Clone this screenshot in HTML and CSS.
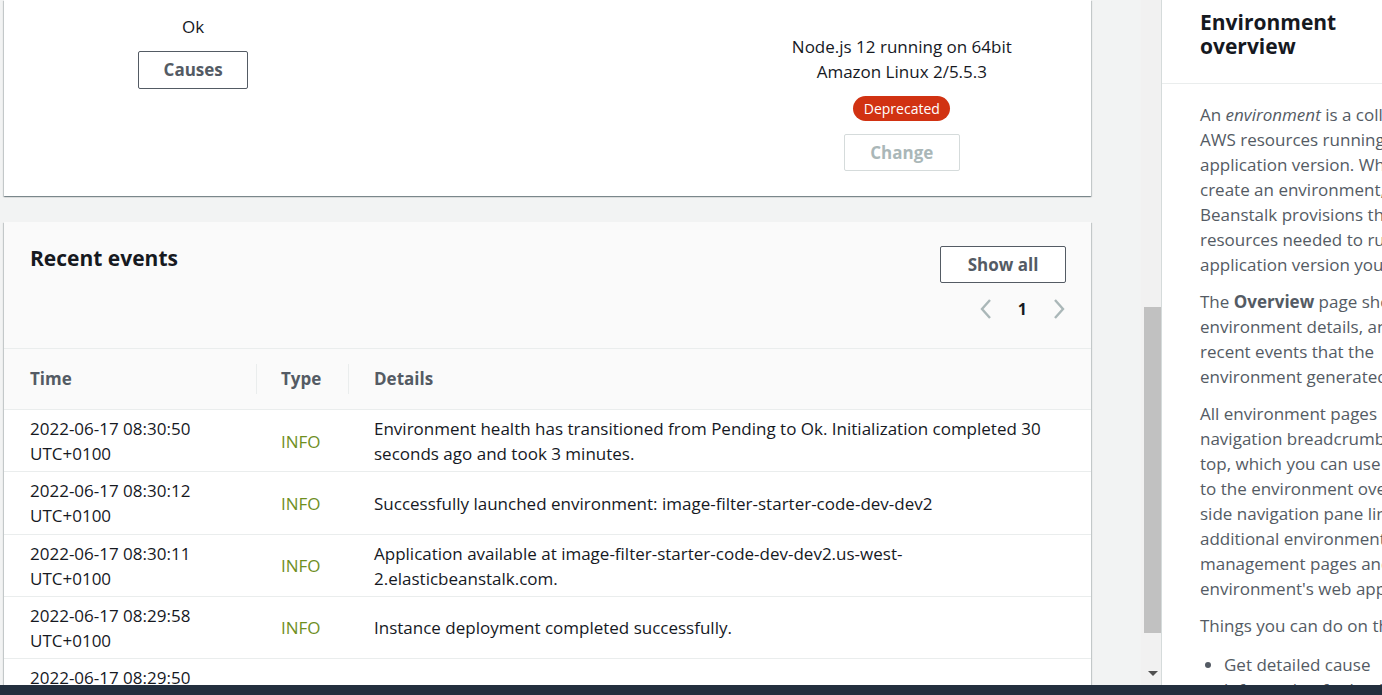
FILE: index.html
```html
<!DOCTYPE html>
<html lang="en">
<head>
<meta charset="utf-8">
<title>Environment overview</title>
<link rel="stylesheet" href="styles.css">
</head>
<body>
<div class="app">
  <div class="main">
    <div class="content">
      <section class="card summary">
        <div class="col col-health">
          <div class="value">Ok</div>
          <button class="btn btn-causes">Causes</button>
        </div>
        <div class="col"></div>
        <div class="col col-platform">
          <div class="value">Node.js 12 running on 64bit<br>Amazon Linux 2/5.5.3</div>
          <span class="badge">Deprecated</span>
          <button class="btn btn-change" disabled>Change</button>
        </div>
      </section>

      <section class="card events">
        <div class="events-head">
          <h2 class="events-title">Recent events</h2>
          <div class="events-actions">
            <button class="btn btn-show">Show all</button>
            <div class="pager">
              <svg class="chev" width="14" height="22" viewBox="0 0 14 22"><path d="M11 2 L3 11 L11 20" fill="none" stroke="#aab7b8" stroke-width="2.4"/></svg>
              <span class="page">1</span>
              <svg class="chev" width="14" height="22" viewBox="0 0 14 22"><path d="M3 2 L11 11 L3 20" fill="none" stroke="#aab7b8" stroke-width="2.4"/></svg>
            </div>
          </div>
        </div>
        <table class="events-table">
          <thead>
            <tr>
              <th class="c-time">Time</th>
              <th class="c-type sep">Type</th>
              <th class="c-details sep">Details</th>
            </tr>
          </thead>
          <tbody>
            <tr>
              <td class="c-time">2022-06-17 08:30:50<br>UTC+0100</td>
              <td class="c-type info">INFO</td>
              <td class="c-details">Environment health has transitioned from Pending to Ok. Initialization completed 30 seconds ago and took 3 minutes.</td>
            </tr>
            <tr>
              <td class="c-time">2022-06-17 08:30:12<br>UTC+0100</td>
              <td class="c-type info">INFO</td>
              <td class="c-details">Successfully launched environment: image-filter-starter-code-dev-dev2</td>
            </tr>
            <tr>
              <td class="c-time">2022-06-17 08:30:11<br>UTC+0100</td>
              <td class="c-type info">INFO</td>
              <td class="c-details">Application available at image-filter-starter-code-dev-dev2.us-west-2.elasticbeanstalk.com.</td>
            </tr>
            <tr>
              <td class="c-time">2022-06-17 08:29:58<br>UTC+0100</td>
              <td class="c-type info">INFO</td>
              <td class="c-details">Instance deployment completed successfully.</td>
            </tr>
            <tr>
              <td class="c-time">2022-06-17 08:29:50<br>UTC+0100</td>
              <td class="c-type info">INFO</td>
              <td class="c-details">Added instance [i-0987654321abcdef0] to your environment.</td>
            </tr>
          </tbody>
        </table>
      </section>
    </div>
    <div class="scrollbar">
      <div class="sb-space"></div>
      <div class="sb-thumb"></div>
      <div class="sb-rest"><span class="sb-arrow"></span></div>
    </div>
  </div>

  <aside class="help">
    <div class="help-head">
      <h2 class="help-title">Environment overview</h2>
    </div>
    <div class="help-body">
      <p>An <em>environment</em> is a collection of<br>AWS resources running an<br>application version. When you<br>create an environment, Elastic<br>Beanstalk provisions the<br>resources needed to run the<br>application version you specified.</p>
      <p>The <strong>Overview</strong> page shows the<br>environment details, and the<br>recent events that the<br>environment generated.</p>
      <p>All environment pages have a<br>navigation breadcrumb at the<br>top, which you can use to return<br>to the environment overview. The<br>side navigation pane links to<br>additional environment<br>management pages and to your<br>environment's web application.</p>
      <p>Things you can do on this page:</p>
      <ul>
        <li>Get detailed cause<br>information for health issues.</li>
      </ul>
    </div>
  </aside>
</div>
<footer class="footer"></footer>
</body>
</html>
```

FILE: styles.css
```css
html, body {
  margin: 0;
  padding: 0;
}

body {
  width: 1382px;
  height: 695px;
  overflow: hidden;
  display: flex;
  flex-direction: column;
  background: #f2f3f3;
  color: #16191f;
  font-family: "Open Sans", "Noto Sans", sans-serif;
  font-size: 17px;
  line-height: 25px;
}

.app {
  display: flex;
  height: 685px;
  flex: none;
  overflow: hidden;
}

.main {
  display: flex;
  width: 1161px;
  flex: none;
}

.content {
  width: 1141px;
  flex: none;
  padding-left: 4px;
  box-sizing: border-box;
}

.card {
  width: 1087px;
  background: #fff;
  box-shadow: 0 1px 1px 0 rgba(0, 28, 36, 0.3), 1px 1px 1px 0 rgba(0, 28, 36, 0.15), -1px 1px 1px 0 rgba(0, 28, 36, 0.15);
}

/* summary card */
.summary {
  height: 196px;
  box-sizing: border-box;
  display: grid;
  grid-template-columns: repeat(3, 1fr);
  column-gap: 16px;
  padding: 14px 20px 0;
}

.col {
  display: flex;
  flex-direction: column;
  align-items: center;
  text-align: center;
}

.col-platform {
  padding-top: 20px;
}

.btn {
  font-family: inherit;
  font-size: 17px;
  font-weight: 700;
  background: #fff;
  color: #545b64;
  border: 1px solid #545b64;
  border-radius: 2px;
  box-sizing: border-box;
  padding: 0;
  line-height: 20px;
}

.btn-causes {
  width: 110px;
  height: 38px;
  margin-top: 12px;
}

.badge {
  margin-top: 12px;
  height: 25px;
  width: 97px;
  box-sizing: border-box;
  border-radius: 13px;
  background: #d13212;
  color: #fff;
  font-size: 14px;
  line-height: 25px;
}

.btn-change {
  width: 116px;
  height: 37px;
  margin-top: 13px;
  border-color: #d5dbdb;
  color: #aab7b8;
  line-height: 18px;
}

/* events card */
.events {
  margin-top: 26px;
}

.events-head {
  height: 127px;
  box-sizing: border-box;
  display: flex;
  justify-content: space-between;
  align-items: flex-start;
  padding: 24px 25px 0 26px;
  background: #fafafa;
  border-bottom: 1px solid #eaeded;
}

.events-title {
  margin: 0;
  font-size: 21px;
  line-height: 24px;
  font-weight: 700;
}

.events-actions {
  display: flex;
  flex-direction: column;
  align-items: flex-end;
}

.btn-show {
  width: 126px;
  height: 37px;
}

.pager {
  display: flex;
  align-items: center;
  gap: 25px;
  margin-top: 14px;
  height: 24px;
}

.page {
  font-weight: 700;
  font-size: 16px;
}

.events-table {
  width: 100%;
  border-collapse: collapse;
}

.events-table th {
  height: 60px;
  padding: 0;
  text-align: left;
  background: #fafafa;
  color: #545b64;
  font-size: 17px;
  font-weight: 700;
  line-height: 22px;
  border-bottom: 1px solid #eaeded;
}

.events-table th.sep {
  background: #fafafa linear-gradient(#eaeded, #eaeded) no-repeat left center / 1px 30px;
}

.events-table td {
  padding: 6px 0 5.25px;
  vertical-align: middle;
  border-bottom: 1px solid #eaeded;
}

.c-time {
  width: 226px;
  padding-left: 26px !important;
}

.c-type {
  width: 67px;
  padding-left: 25px !important;
}

.c-details {
  padding-left: 26px !important;
  padding-right: 26px !important;
}

.info {
  color: #6f8f1f;
}

/* fake scrollbar */
.scrollbar {
  width: 20px;
  flex: none;
  display: flex;
  flex-direction: column;
  align-items: flex-end;
  background: #f1f1f1;
}

.sb-space {
  height: 307px;
}

.sb-thumb {
  width: 17px;
  height: 326px;
  background: #c1c1c1;
}

.sb-rest {
  flex: 1;
  width: 17px;
  display: flex;
  align-items: flex-end;
  justify-content: center;
}

.sb-arrow {
  width: 0;
  height: 0;
  margin-bottom: 9px;
  border-left: 5px solid transparent;
  border-right: 5px solid transparent;
  border-top: 5px solid #505050;
}

/* help panel */
.help {
  width: 380px;
  flex: none;
  background: #fff;
  border-left: 1px solid #d5dbdb;
}

.help-head {
  height: 84px;
  box-sizing: border-box;
  padding: 10px 20px 0 38px;
  border-bottom: 1px solid #eaeded;
}

.help-title {
  margin: 0;
  max-width: 200px;
  font-size: 21px;
  line-height: 24px;
  font-weight: 700;
}

.help-body {
  padding: 18px 20px 0 38px;
  color: #545b64;
  white-space: nowrap;
}

.help-body p {
  margin: 0 0 12px;
}

.help-body ul {
  margin: 14px 0 0;
  padding-left: 24px;
}

.footer {
  height: 10px;
  flex: none;
  background: #232f3e;
}
```
